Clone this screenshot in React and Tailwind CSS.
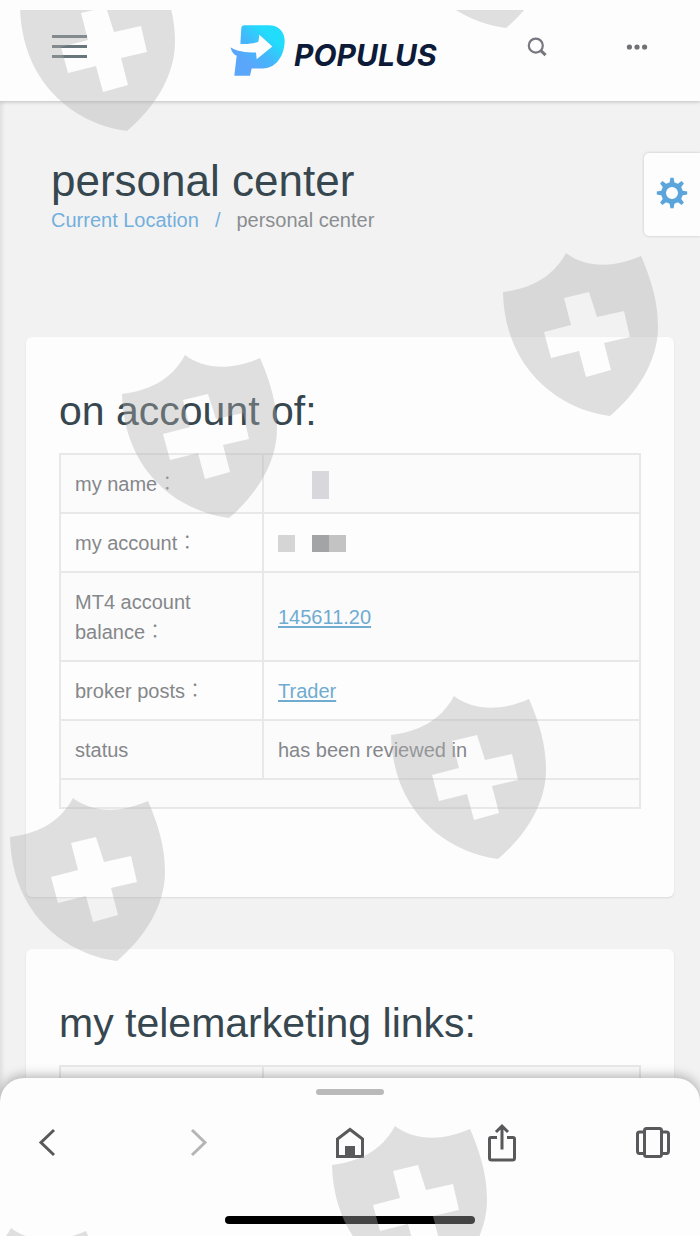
const shields = [
  "left-[19px] top-[-43px]",
  "left-[398px] top-[-146px]",
  "left-[502px] top-[242px]",
  "left-[121px] top-[344px]",
  "left-[390px] top-[685px]",
  "left-[9px] top-[787px]",
  "left-[331px] top-[1115px]",
  "left-[-53px] top-[1217px]",
];

const accountRows = [
  {
    label: "my name：",
    value: (
      <div className="flex h-[30px] items-end pl-[34px]">
        <span className="h-7 w-[17px] bg-[#d8d8dc]" />
      </div>
    ),
  },
  {
    label: "my account：",
    value: (
      <div className="flex h-[30px] items-center">
        <span className="h-[17px] w-[17px] bg-[#d5d5d5]" />
        <span className="ml-[17px] h-[17px] w-[17px] bg-[#a2a4a6]" />
        <span className="h-[17px] w-[17px] bg-[#c3c3c4]" />
      </div>
    ),
  },
  { label: "MT4 account balance：", value: "145611.20", link: true },
  { label: "broker posts：", value: "Trader", link: true },
  { label: "status", value: "has been reviewed in" },
];

function Shield({ className }) {
  return (
    <svg
      viewBox="0 0 158 166"
      className={`absolute h-[166px] w-[158px] ${className}`}
    >
      <path
        fill="#aeaeae"
        fillOpacity="0.39"
        fillRule="evenodd"
        d="M1 40C26 37 50 27 64 1C82 15 110 17 139 4C152 34 156 55 156 75C156 110 134 142 108 164C60 158 3 120 1 40Z
           M62 46L69 73L42 80L49 106L77 99L84 125L109 118L102 91L128 85L122 59L95 65L87 40Z"
      />
    </svg>
  );
}

function Logo() {
  return (
    <a href="#" className="ml-[143px] flex items-center">
      <svg viewBox="30 45 168 158" className="h-[53px] w-14">
        <defs>
          <linearGradient id="logo" x1="0.2" y1="0.9" x2="0.85" y2="0.2">
            <stop offset="0.2" stopColor="#5aa6fb" />
            <stop offset="0.55" stopColor="#42b8fb" />
            <stop offset="0.9" stopColor="#22dcfb" />
          </linearGradient>
        </defs>
        <path
          fill="url(#logo)"
          d="M72 48H145C180 48 195 72 194 98C192 145 165 178 128 178H95L90 200H43L50 140C40 135 34 127 32 115L61 105L64 56Q65 48 72 48Z"
        />
        <path
          fill="#fdfdfd"
          d="M60 104C80 106 100 103 115 98L118 77L157 112L110 150L108 130C75 130 48 126 33 115L28 104Z"
        />
      </svg>
      <span className="mt-2 ml-2 font-['Inter',sans-serif] text-[30px] leading-9 font-bold text-[#0d1b38] italic">
        POPULUS
      </span>
    </a>
  );
}

function Header() {
  return (
    <header className="relative z-10 flex h-[101px] shrink-0 items-center bg-[#fdfdfd] pr-[52px] pb-2 pl-[52px] shadow-[0_1px_4px_rgba(0,0,0,0.2)]">
      <button aria-label="Menu" className="flex flex-col gap-[7px]">
        <span className="h-[3px] w-[35px] bg-[#68757b]" />
        <span className="h-[3px] w-[35px] bg-[#68757b]" />
        <span className="h-[3px] w-[35px] bg-[#68757b]" />
      </button>
      <div className="pt-2">
        <Logo />
      </div>
      <div className="ml-auto flex items-center gap-[79px]">
        <button aria-label="Search">
          <svg
            viewBox="0 0 20 20"
            className="h-5 w-5"
            fill="none"
            stroke="#77777f"
            strokeWidth="2.2"
          >
            <circle cx="8.8" cy="8.6" r="7" />
            <path d="M13.8 13.6L18.6 18.2" strokeWidth="3" />
          </svg>
        </button>
        <button aria-label="More">
          <svg viewBox="0 0 22 6" className="h-[6px] w-[22px]" fill="#717175">
            <circle cx="3.4" cy="3" r="2.6" />
            <circle cx="11" cy="3" r="2.6" />
            <circle cx="18.6" cy="3" r="2.6" />
          </svg>
        </button>
      </div>
    </header>
  );
}

function SettingsTab() {
  return (
    <button
      aria-label="Settings"
      className="absolute top-[52px] right-0 flex h-[83px] w-14 justify-center rounded-l-[5px] bg-[#fdfdfd] pt-6 shadow-[0_0_3px_rgba(0,0,0,0.2)]"
    >
      <svg viewBox="-16 -16 32 32" className="h-8 w-8">
        <circle r="8.4" fill="none" stroke="#5ba4dc" strokeWidth="4.8" />
        {[0, 45, 90, 135, 180, 225, 270, 315].map((angle) => (
          <path
            key={angle}
            d="M-2.6 -9.5L-1.6 -15.2H1.6L2.6 -9.5Z"
            fill="#5ba4dc"
            transform={`rotate(${angle})`}
          />
        ))}
      </svg>
    </button>
  );
}

function Card({ title, children }) {
  return (
    <section className="rounded-md bg-[#fdfdfd] px-[33px] pt-[51px] pb-[88px] shadow-[0_1px_2px_rgba(0,0,0,0.1)]">
      <h2 className="text-[41px] leading-[46px] text-[#37474f]">{title}</h2>
      <table className="mt-[19px] w-full table-fixed border-collapse border-2 border-[#e8e8e9] text-left text-xl leading-[30px] text-[#85878a]">
        <colgroup>
          <col className="w-[203px]" />
          <col />
        </colgroup>
        <tbody>{children}</tbody>
      </table>
    </section>
  );
}

function Row({ label, children }) {
  return (
    <tr className="odd:bg-[#fbfbfc]">
      <th
        scope="row"
        className="border-2 border-[#e8e8e9] px-[14px] pt-[14px] pb-[13px] font-light"
      >
        {label}
      </th>
      <td className="border-2 border-[#e8e8e9] px-[14px] pt-[14px] pb-[13px] font-light">
        {children}
      </td>
    </tr>
  );
}

function BrowserBar() {
  return (
    <nav className="relative z-10 -mt-6 flex shrink-0 flex-col items-center rounded-t-3xl bg-[#fdfdfd] pt-[11px] pb-3 shadow-[0_-2px_12px_rgba(0,0,0,0.3)]">
      <span className="h-[6px] w-[68px] rounded-full bg-[#bababa]" />
      <div className="mt-[23px] flex w-full justify-between px-[23px] text-[#59595b]">
        <button aria-label="Back" className="grid h-12 w-12 place-items-center">
          <svg viewBox="0 0 48 48" fill="none" stroke="currentColor" strokeWidth="3">
            <path d="M31 12L18 24.5L31 37" />
          </svg>
        </button>
        <button
          aria-label="Forward"
          className="grid h-12 w-12 place-items-center text-[#b5b5b5]"
        >
          <svg viewBox="0 0 48 48" fill="none" stroke="currentColor" strokeWidth="3">
            <path d="M17 12L30 24.5L17 37" />
          </svg>
        </button>
        <button aria-label="Home" className="grid h-12 w-12 place-items-center">
          <svg viewBox="0 0 48 48" fill="none" stroke="currentColor" strokeWidth="3">
            <path d="M11.5 38.5V21L24 11.5L36.5 21V38.5Z" />
            <path d="M19 28H29V39H19Z" fill="currentColor" stroke="none" />
          </svg>
        </button>
        <button aria-label="Share" className="grid h-12 w-12 place-items-center">
          <svg viewBox="0 0 48 48" fill="none" stroke="currentColor" strokeWidth="3">
            <path d="M19 19.5H13Q11.5 19.5 11.5 21V40Q11.5 42 13.5 42H34.5Q36.5 42 36.5 40V21Q36.5 19.5 35 19.5H29" />
            <path d="M24 31.5V8M18 14L24 8L30 14" />
          </svg>
        </button>
        <button aria-label="Tabs" className="grid h-12 w-12 place-items-center">
          <svg viewBox="0 0 48 48" fill="none" stroke="currentColor" strokeWidth="3">
            <rect x="15.5" y="10.5" width="17" height="28" rx="2" />
            <path d="M15 14H10.5Q8.5 14 8.5 16V33Q8.5 35.5 10.5 35.5H15M33 14H37.5Q39.5 14 39.5 16V33Q39.5 35.5 37.5 35.5H33" />
          </svg>
        </button>
      </div>
      <span className="mt-[50px] h-2 w-[250px] rounded-full bg-black" />
    </nav>
  );
}

export default function App() {
  return (
    <div className="relative flex h-screen flex-col overflow-hidden bg-[#f2f2f2] font-['Liberation_Sans','Noto_Sans_CJK_TC',sans-serif]">
      <Header />
      <main className="relative min-h-0 flex-1 overflow-hidden pt-[56px] shadow-[inset_4px_0_4px_-2px_#dcdcdc]">
        <SettingsTab />
        <div className="px-[51px]">
          <h1 className="text-[44px] leading-[48px] text-[#37474f]">
            personal center
          </h1>
          <div className="flex text-xl leading-[30px] text-[#8b8e91]">
            <a href="#" className="text-[#73afdd]">
              Current Location
            </a>
            <span className="px-4 text-[#73afdd]">/</span>
            <span>personal center</span>
          </div>
        </div>
        <div className="mt-[102px] flex flex-col gap-[52px] px-[26px]">
          <Card title="on account of:">
            {accountRows.map((row) => (
              <Row key={row.label} label={row.label}>
                {row.link ? (
                  <a href="#" className="text-[#70acd0] underline underline-offset-2">
                    {row.value}
                  </a>
                ) : (
                  row.value
                )}
              </Row>
            ))}
            <tr>
              <td
                colSpan={2}
                className="border-2 border-[#e8e8e9] bg-[#fbfbfb] pt-[14px] pb-[13px]"
              />
            </tr>
          </Card>
          <Card title="my telemarketing links:">
            <Row label="" />
          </Card>
        </div>
      </main>
      <BrowserBar />
      <div
        aria-hidden="true"
        className="pointer-events-none absolute inset-x-0 top-[10px] bottom-0 z-20 overflow-hidden"
      >
        {shields.map((position) => (
          <Shield key={position} className={position} />
        ))}
      </div>
    </div>
  );
}
